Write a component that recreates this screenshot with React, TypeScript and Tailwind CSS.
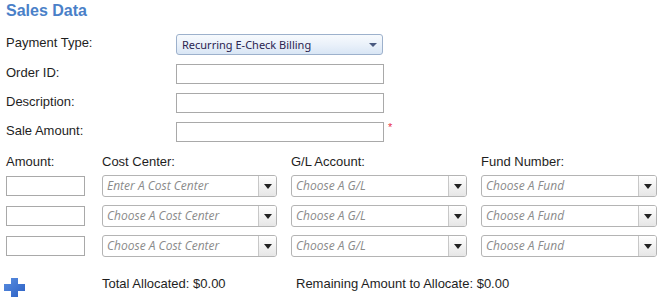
import React from "react";

function Combo({ placeholder, width }: { placeholder: string; width: string }) {
  return (
    <div className={`flex h-[22px] ${width} rounded-[3px] border border-[#b4b4b4] bg-white overflow-hidden`}>
      <div className="flex-1 flex items-center pl-[4px] text-[12px] italic text-[#8a8a8a] font-['Open_Sans',sans-serif] whitespace-nowrap overflow-hidden">
        {placeholder}
      </div>
      <div className="w-[18px] border-l border-[#c8c8c8] bg-gradient-to-b from-[#ffffff] to-[#e6e6e6] flex items-center justify-center">
        <svg width="8" height="5" viewBox="0 0 8 5">
          <path d="M0 0 H8 L4 5 Z" fill="#222" />
        </svg>
      </div>
    </div>
  );
}

function Input({ width }: { width: string }) {
  return <div className={`h-[20px] ${width} border border-[#a9a9a9] bg-white`} />;
}

export default function App() {
  const rows = ["Enter A Cost Center", "Choose A Cost Center", "Choose A Cost Center"];
  return (
    <div className="w-[666px] h-[300px] bg-white overflow-hidden font-['Liberation_Sans',Arial,sans-serif] text-[13px] text-[#1e1e1e]">
      <div className="pl-[6px] pt-[1px] h-[34px] text-[16px] leading-[20px] font-bold text-[#4a80c8]">Sales Data</div>

      <div className="flex flex-col gap-[9px]">
        <div className="flex items-start h-[21px]">
          <div className="w-[176px] pl-[6px] leading-[15px] pt-[1px]">Payment Type:</div>
          <div className="flex items-center justify-between w-[207px] h-[21px] rounded-[3px] border border-[#9db1cc] bg-gradient-to-b from-[#f7fafd] via-[#eaf1fa] to-[#d9e6f5] pl-[5px] pr-[5px]">
            <span className="text-[11px] text-[#2b2450] font-['Noto_Sans',sans-serif] leading-[16px]">Recurring E-Check Billing</span>
            <svg width="8" height="4" viewBox="0 0 8 4">
              <path d="M0 0 H8 L4 4 Z" fill="#4a5a80" />
            </svg>
          </div>
        </div>
        <div className="flex items-start h-[20px]">
          <div className="w-[176px] pl-[6px] leading-[15px] pt-[1px]">Order ID:</div>
          <Input width="w-[208px]" />
        </div>
        <div className="flex items-start h-[20px]">
          <div className="w-[176px] pl-[6px] leading-[15px] pt-[1px]">Description:</div>
          <Input width="w-[208px]" />
        </div>
        <div className="flex items-start h-[20px]">
          <div className="w-[176px] pl-[6px] leading-[15px] pt-[1px]">Sale Amount:</div>
          <Input width="w-[208px]" />
          <span className="ml-[4px] text-[11px] leading-[11px] text-[#e8304a]">*</span>
        </div>
      </div>

      <div className="flex mt-[12px] h-[17px] leading-[15px]">
        <div className="w-[96px] pl-[6px]">Amount:</div>
        <div className="w-[189px] pl-[6px]">Cost Center:</div>
        <div className="w-[190px] pl-[6px]">G/L Account:</div>
        <div className="pl-[6px]">Fund Number:</div>
      </div>

      <div className="flex flex-col gap-[8px] mt-[4px]">
        {rows.map((p, i) => (
          <div key={i} className="flex items-center h-[22px]">
            <div className="w-[102px] pl-[6px]">
              <Input width="w-[79px]" />
            </div>
            <div className="w-[189px]">
              <Combo placeholder={p} width="w-[175px]" />
            </div>
            <div className="w-[190px]">
              <Combo placeholder="Choose A G/L" width="w-[176px]" />
            </div>
            <Combo placeholder="Choose A Fund" width="w-[176px]" />
          </div>
        ))}
      </div>

      <div className="flex items-start mt-[19px]">
        <div className="w-[102px] pl-[4px] pt-[2px]">
          <svg width="21" height="19" viewBox="0 0 21 19">
            <defs>
              <linearGradient id="pg" x1="0" y1="0" x2="1" y2="1">
                <stop offset="0" stopColor="#5b8fe0" />
                <stop offset="1" stopColor="#2a5fc4" />
              </linearGradient>
            </defs>
            <path d="M7 0 H14 V6 H21 V13 H14 V19 H7 V13 H0 V6 H7 Z" fill="url(#pg)" />
          </svg>
        </div>
        <div className="w-[194px] leading-[15px]">Total Allocated: $0.00</div>
        <div className="leading-[15px]">Remaining Amount to Allocate: $0.00</div>
      </div>
    </div>
  );
}
